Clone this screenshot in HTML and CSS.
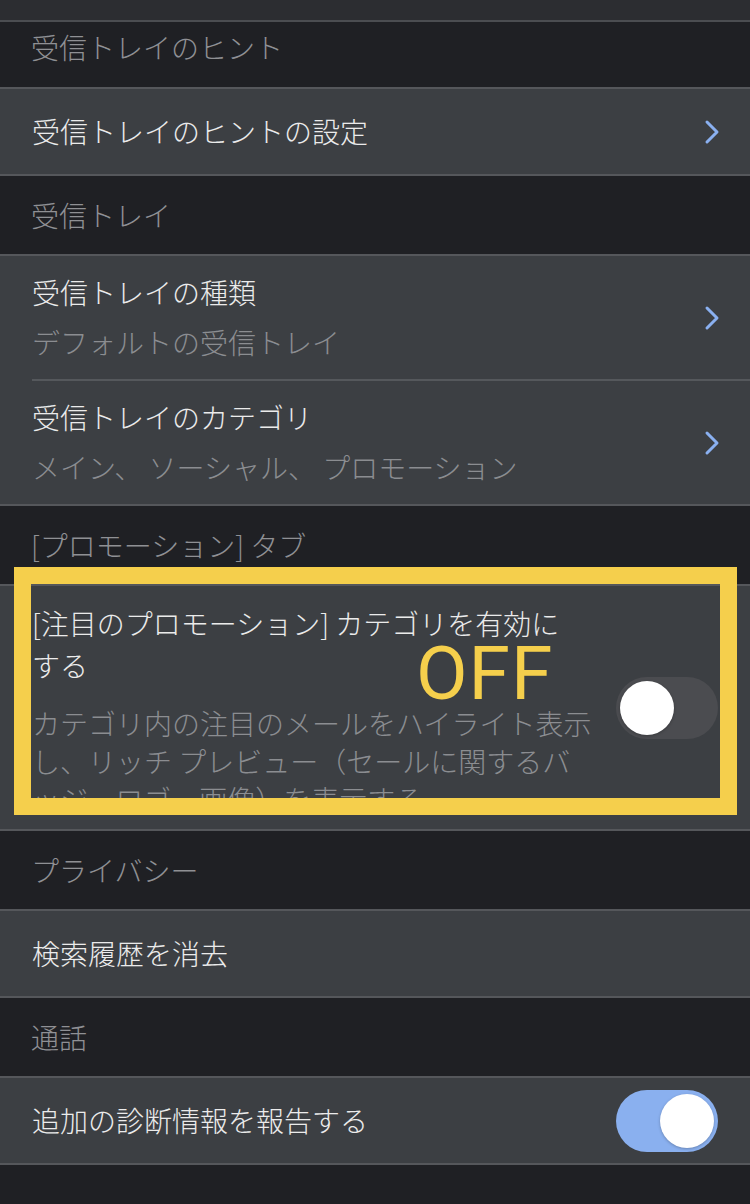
FILE: index.html
```html
<!DOCTYPE html>
<html lang="ja">
<head>
  <meta charset="UTF-8">
  <meta name="viewport" content="width=device-width, initial-scale=1.0">
  <title>設定</title>
  <link rel="stylesheet" href="styles.css">
</head>
<body>
  <div class="topbar"></div>

  <div class="section-title first">受信トレイのヒント</div>
  <div class="group">
    <div class="cell">
      <div class="cell-text">
        <div class="label">受信トレイのヒントの設定</div>
      </div>
      <svg class="chevron" width="16" height="26" viewBox="0 0 16 26"><polyline points="3,3 13,13 3,23" /></svg>
    </div>
  </div>

  <div class="section-title">受信トレイ</div>
  <div class="group">
    <div class="cell two-line">
      <div class="cell-text">
        <div class="label">受信トレイの種類</div>
        <div class="sub">デフォルトの受信トレイ</div>
      </div>
      <svg class="chevron" width="16" height="26" viewBox="0 0 16 26"><polyline points="3,3 13,13 3,23" /></svg>
    </div>
    <div class="divider"></div>
    <div class="cell two-line">
      <div class="cell-text">
        <div class="label">受信トレイのカテゴリ</div>
        <div class="sub">メイン、 ソーシャル、 プロモーション</div>
      </div>
      <svg class="chevron" width="16" height="26" viewBox="0 0 16 26"><polyline points="3,3 13,13 3,23" /></svg>
    </div>
  </div>

  <div class="section-title">[プロモーション] タブ</div>
  <div class="group">
    <div class="cell promo">
      <div class="cell-text">
        <div class="label">[注目のプロモーション] カテゴリを有効に<br>する</div>
        <div class="sub">カテゴリ内の注目のメールをハイライト表示<br>し、リッチ プレビュー（セールに関するバ<br>ッジ、ロゴ、画像）を表示する</div>
      </div>
      <div class="switch"><div class="knob"></div></div>
      <div class="highlight">
        <span class="highlight-note">OFF</span>
      </div>
    </div>
  </div>

  <div class="section-title">プライバシー</div>
  <div class="group">
    <div class="cell">
      <div class="cell-text">
        <div class="label">検索履歴を消去</div>
      </div>
    </div>
  </div>

  <div class="section-title">通話</div>
  <div class="group">
    <div class="cell">
      <div class="cell-text">
        <div class="label">追加の診断情報を報告する</div>
      </div>
      <div class="switch on"><div class="knob"></div></div>
    </div>
  </div>
</body>
</html>
```

FILE: styles.css
```css
body {
  margin: 0;
  padding: 0;
  background: #1f2024;
  font-family: 'Noto Sans CJK JP', 'Noto Sans', sans-serif;
  font-weight: 300;
  color: #ebebeb;
  height: 1204px;
  overflow: hidden;
}

.topbar {
  height: 20px;
  background: #2c2d31;
  border-bottom: 2px solid #4b4d51;
}

.section-title {
  height: 78px;
  display: flex;
  align-items: center;
  padding-left: 31px;
  font-size: 28px;
  color: #8f9094;
}

.section-title.first {
  height: 50px;
  padding-bottom: 15px;
}

.group {
  background: #3c3f43;
  border-top: 2px solid #55575b;
  border-bottom: 2px solid #55575b;
}

.cell {
  height: 85px;
  display: flex;
  align-items: center;
  padding: 0 30px 0 32px;
  position: relative;
}

.cell-text {
  flex: 1;
  min-width: 0;
}

.label {
  font-size: 28px;
  line-height: 39px;
  white-space: nowrap;
}

.sub {
  font-size: 28px;
  line-height: 39px;
  margin-top: 11px;
  color: #8b8d91;
  white-space: nowrap;
}

.cell.two-line {
  height: 123px;
}

.divider {
  height: 2px;
  margin-left: 32px;
  background: #55585c;
}

.chevron {
  flex-shrink: 0;
  fill: none;
  stroke: #8ab0f0;
  stroke-width: 3;
  stroke-linecap: round;
  stroke-linejoin: round;
}

/* promotions row */
.cell.promo {
  height: 243px;
  align-items: flex-start;
  padding-top: 16px;
  box-sizing: border-box;
  padding-right: 32px;
}

.promo .label {
  line-height: 42px;
}

.promo .sub {
  line-height: 38px;
  margin-top: 18px;
}

.promo .switch {
  align-self: center;
  margin-top: -16px;
}

.switch {
  flex-shrink: 0;
  width: 102px;
  height: 62px;
  border-radius: 31px;
  background: #4b4c50;
  position: relative;
}

.switch .knob {
  position: absolute;
  top: 4px;
  left: 4px;
  width: 54px;
  height: 54px;
  border-radius: 50%;
  background: #fff;
  box-shadow: 0 1px 3px rgba(0, 0, 0, 0.25);
}

.switch.on {
  background: #8ab0ef;
  margin-right: 2px;
}

.switch.on .knob {
  left: auto;
  right: 4px;
}

.highlight {
  position: absolute;
  top: -19px;
  left: 14px;
  width: 723px;
  height: 248px;
  box-sizing: border-box;
  border: 17px solid #f5cf4c;
  z-index: 2;
}

.highlight-note {
  position: absolute;
  left: 385px;
  top: 52px;
  font-family: Roboto, 'Liberation Sans', sans-serif;
  font-weight: 400;
  font-size: 75px;
  line-height: 75px;
  letter-spacing: 1px;
  color: #f5cf4c;
}
```
